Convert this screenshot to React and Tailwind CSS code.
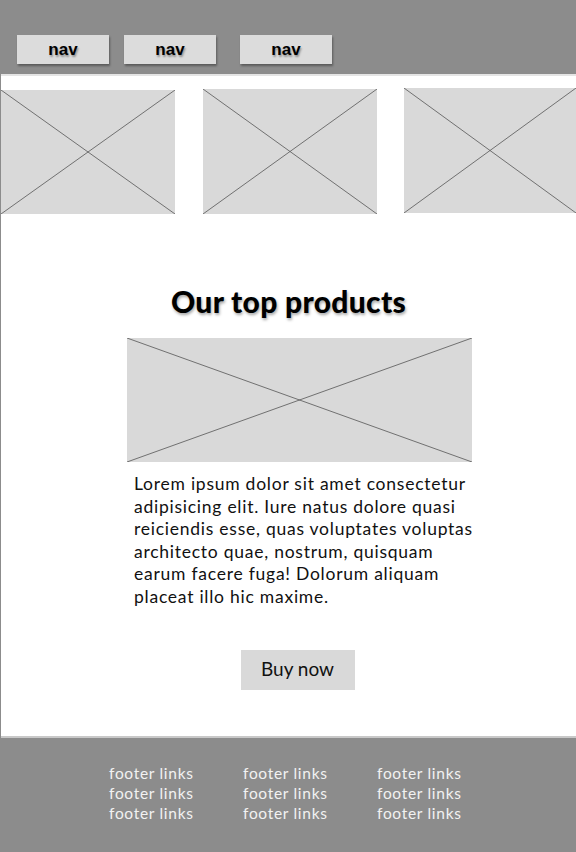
import React from 'react';

const Placeholder = ({ className = '' }) => (
  <div className={['relative bg-[#d9d9d9]', className].join(' ')}>
    <svg className="absolute inset-0 h-full w-full" preserveAspectRatio="none" viewBox="0 0 100 100">
      <line x1="0" y1="0" x2="100" y2="100" stroke="#555" strokeWidth="0.8" vectorEffect="non-scaling-stroke" />
      <line x1="100" y1="0" x2="0" y2="100" stroke="#555" strokeWidth="0.8" vectorEffect="non-scaling-stroke" />
    </svg>
  </div>
);

const NavButton = ({ className = '' }) => (
  <div
    className={[
      'flex h-[29px] w-[92px] items-center justify-center bg-[#dcdcdc] shadow-[1px_2px_2px_rgba(0,0,0,0.35)]',
      className,
    ].join(' ')}
  >
    <span className="font-['Liberation_Sans',Arial,sans-serif] text-[17px] font-bold leading-none text-black [text-shadow:1px_2px_2px_rgba(0,0,0,0.35)]">
      nav
    </span>
  </div>
);

const lines = [
  'Lorem ipsum dolor sit amet consectetur',
  'adipisicing elit. Iure natus dolore quasi',
  'reiciendis esse, quas voluptates voluptas',
  'architecto quae, nostrum, quisquam',
  'earum facere fuga! Dolorum aliquam',
  'placeat illo hic maxime.',
];

export default function App() {
  const links = [0, 1, 2];
  return (
    <div className="flex h-[852px] w-[576px] flex-col overflow-hidden border-l border-[#8c8c8c] bg-white font-['Lato',sans-serif]">
      <header className="flex h-[76px] shrink-0 items-end border-b-2 border-[#e4e4e4] bg-[#8c8c8c] pb-[10px] pl-[16px]">
        <NavButton />
        <NavButton className="ml-[15px]" />
        <NavButton className="ml-[24px]" />
      </header>

      <div className="mt-[12px] flex items-start justify-between">
        <Placeholder className="mt-[2px] h-[124px] w-[174px]" />
        <Placeholder className="mt-[1px] h-[125px] w-[174px]" />
        <Placeholder className="h-[125px] w-[172px]" />
      </div>

      <main className="flex flex-1 flex-col items-center">
        <h1 className="mt-[70px] font-['Lato',sans-serif] text-[30px] font-black leading-[35px] tracking-[0.3px] text-black [text-shadow:1px_2px_3px_rgba(0,0,0,0.35)]">
          Our top products
        </h1>
        <Placeholder className="ml-[22px] mt-[19px] h-[124px] w-[345px]" />
        <p className="ml-[22px] mt-[11px] w-[345px] whitespace-nowrap pl-[7px] text-[17.5px] leading-[22.6px] tracking-[0.75px] text-[#111]">
          {lines.map((l, i) => (
            <span key={i} className="block">
              {l}
            </span>
          ))}
        </p>
        <button className="ml-[18px] mt-[41px] flex h-[40px] w-[114px] items-center justify-center bg-[#d9d9d9] text-[19px] text-[#111]">
          Buy now
        </button>
      </main>

      <footer className="flex h-[116px] shrink-0 border-t-2 border-[#c8c8c8] bg-[#8c8c8c] pl-[108px] pt-[25px]">
        {links.map((c) => (
          <div key={c} className="flex w-[134px] flex-col text-[15.5px] leading-[20px] tracking-[0.7px] text-[#f2f2f2]">
            <span>footer links</span>
            <span>footer links</span>
            <span>footer links</span>
          </div>
        ))}
      </footer>
    </div>
  );
}
